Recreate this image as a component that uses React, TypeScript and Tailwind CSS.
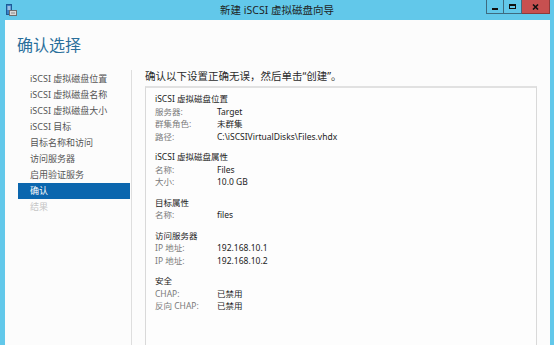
import React from 'react';

const steps = [
  { label: 'iSCSI 虚拟磁盘位置', state: 'done' },
  { label: 'iSCSI 虚拟磁盘名称', state: 'done' },
  { label: 'iSCSI 虚拟磁盘大小', state: 'done' },
  { label: 'iSCSI 目标', state: 'done' },
  { label: '目标名称和访问', state: 'done' },
  { label: '访问服务器', state: 'done' },
  { label: '启用验证服务', state: 'done' },
  { label: '确认', state: 'active' },
  { label: '结果', state: 'disabled' },
];

const sections = [
  {
    title: 'iSCSI 虚拟磁盘位置',
    rows: [
      ['服务器:', 'Target'],
      ['群集角色:', '未群集'],
      ['路径:', 'C:\\iSCSIVirtualDisks\\Files.vhdx'],
    ],
  },
  {
    title: 'iSCSI 虚拟磁盘属性',
    rows: [
      ['名称:', 'Files'],
      ['大小:', '10.0 GB'],
    ],
  },
  { title: '目标属性', rows: [['名称:', 'files']] },
  {
    title: '访问服务器',
    rows: [
      ['IP 地址:', '192.168.10.1'],
      ['IP 地址:', '192.168.10.2'],
    ],
  },
  {
    title: '安全',
    rows: [
      ['CHAP:', '已禁用'],
      ['反向 CHAP:', '已禁用'],
    ],
  },
];

function WizardIcon() {
  return (
    <svg width="11" height="12" viewBox="0 0 11 12" className="absolute left-[6px] top-[4px]">
      <rect x="0.5" y="0.5" width="5" height="10" fill="#3a7fc4" stroke="#1d5a96" />
      <line x1="1.5" y1="3" x2="4.5" y2="3" stroke="#ffffff" />
      <line x1="1.5" y1="5" x2="4.5" y2="5" stroke="#ffffff" />
      <rect x="3.5" y="6.5" width="7" height="5" fill="#d8d8d8" stroke="#6d6d6d" />
      <line x1="5" y1="9" x2="9" y2="9" stroke="#8a8a8a" />
    </svg>
  );
}

function TitleBar() {
  return (
    <div className="relative h-5 shrink-0 flex items-center justify-center">
      <WizardIcon />
      <span className="text-[10.5px] leading-[20px] text-[#1e1e1e]">新建 iSCSI 虚拟磁盘向导</span>
      <div className="absolute right-[4px] top-0 flex h-[14px]">
        <div className="w-[18px] h-[14px] border border-[#3e6b80] border-t-0 flex items-end justify-center pb-[3px]">
          <div className="w-[6px] h-[2px] bg-[#111]"></div>
        </div>
        <div className="w-[18px] h-[14px] border border-l-0 border-[#3e6b80] border-t-0 flex items-center justify-center">
          <div className="w-[7px] h-[5px] border border-t-2 border-[#111]"></div>
        </div>
        <div className="w-[28px] h-[14px] bg-[#c75050] border border-l-0 border-[#8e3a3a] border-t-0 flex items-center justify-center">
          <svg width="7" height="6" viewBox="0 0 7 6">
            <path d="M1 0.5 L6 5.5 M6 0.5 L1 5.5" stroke="#111" strokeWidth="1.6" />
          </svg>
        </div>
      </div>
    </div>
  );
}

export default function App() {
  return (
    <div className="w-[554px] h-[345px] bg-[#62c8ea] flex flex-col overflow-hidden font-['Noto_Sans','Noto_Sans_CJK_SC',sans-serif]">
      <TitleBar />
      <div className="flex-1 ml-[5px] mr-[4px] bg-[#fcfcfc] flex flex-col overflow-hidden">
        <h1 className="pt-[15px] pl-[12px] text-[16px] leading-[20px] text-[#2a6f9b]">确认选择</h1>
        <div className="flex flex-1 mt-[15px]">
          <nav className="w-[126px] shrink-0 pl-[13px] pr-[1px] pt-[1px]">
            {steps.map((s) => (
              <div
                key={s.label}
                className={
                  'h-4 flex items-center pl-[12px] text-[9px] leading-4 ' +
                  (s.state === 'active'
                    ? 'bg-[#0b66ae] text-white'
                    : s.state === 'disabled'
                    ? 'text-[#c6c6c6]'
                    : 'text-[#555555]')
                }
              >
                {s.label}
              </div>
            ))}
          </nav>
          <div className="flex-1 flex flex-col border-l border-[#dedede] pl-[13px] pr-[13px]">
            <p className="text-[10.5px] leading-[12px] text-[#2b2b2b]">确认以下设置正确无误，然后单击“创建”。</p>
            <div className="mt-[4px] h-[280px] border border-[#d9d9d9] border-t-2 border-t-[#e1e1e1] bg-[#fdfdfd] pl-[9px] pt-[5px]">
              {sections.map((sec, i) => (
                <div key={sec.title} className={i > 0 ? 'mt-2' : ''}>
                  <div className="text-[8.5px] leading-[12.5px] text-[#1c1c1c]">{sec.title}</div>
                  {sec.rows.map((r, j) => (
                    <div key={j} className="flex text-[8.5px] leading-[12.5px]">
                      <span className="w-[62px] shrink-0 text-[#7a7a7a]">{r[0]}</span>
                      <span className="text-[#1c1c1c]">{r[1]}</span>
                    </div>
                  ))}
                </div>
              ))}
            </div>
          </div>
        </div>
      </div>
    </div>
  );
}
